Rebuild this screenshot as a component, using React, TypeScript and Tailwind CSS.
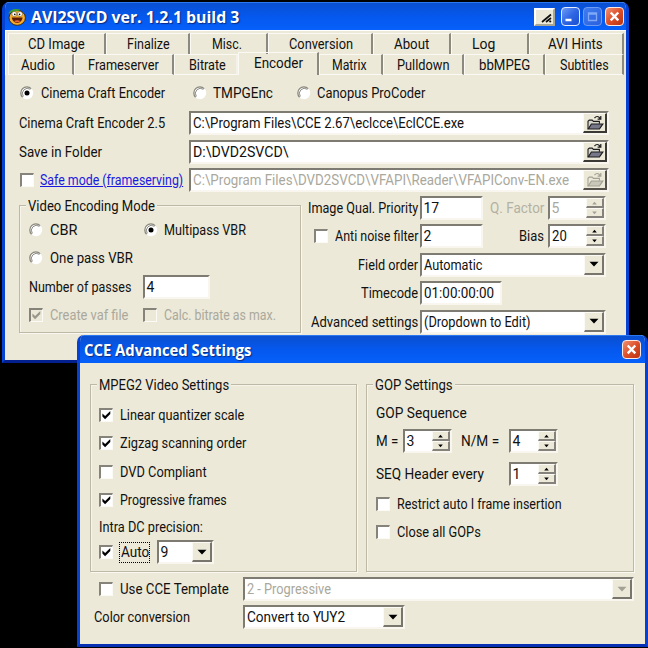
import React, { useLayoutEffect, useRef, useState } from "react";
import clsx from "clsx";

interface TxtProps {
  w: number;
  children: string;
  className?: string;
  inner?: string;
}

function Txt({ w, children, className, inner }: TxtProps) {
  const ref = useRef<HTMLSpanElement>(null);
  const [scale, setScale] = useState(1);

  useLayoutEffect(() => {
    if (ref.current) setScale(w / ref.current.offsetWidth);
  }, [w]);

  return (
    <span className={clsx("block shrink-0 whitespace-nowrap", className)} style={{ width: w }}>
      <span ref={ref} className={clsx("inline-block origin-left", inner)} style={{ transform: `scaleX(${scale})` }}>
        {children}
      </span>
    </span>
  );
}

function Radio({ checked }: { checked?: boolean }) {
  return (
    <svg width="14" height="14" viewBox="0 0 14 14" className="shrink-0">
      <circle cx="7" cy="7" r="6.2" fill="#fff" />
      <path d="M2.6 11.2A6 6 0 0 1 11.2 2.6" fill="none" stroke="#8a887c" strokeWidth="1.3" />
      <path d="M3.4 10.4A5 5 0 0 1 10.4 3.4" fill="none" stroke="#5e5d56" strokeWidth=".7" />
      {checked && <circle cx="7" cy="7" r="2.5" fill="#000" />}
    </svg>
  );
}

function Check({ checked, disabled }: { checked?: boolean; disabled?: boolean }) {
  return (
    <span
      className={clsx(
        "block size-[14px] shrink-0 border-t-2 border-l-2 border-r border-b border-t-[#85837a] border-l-[#85837a] border-r-[#fbfaf5] border-b-[#fbfaf5]",
        disabled ? "bg-[#ece9d8]" : "bg-white"
      )}
    >
      {checked && (
        <svg width="11" height="11" viewBox="0 0 11 11">
          <path d="M1.4 3.4v3.2l2.7 2.7 5.2-5.4V.9L4.1 6.1z" fill={disabled ? "#99978b" : "#000"} />
        </svg>
      )}
    </span>
  );
}

interface FieldProps {
  className?: string;
  children?: React.ReactNode;
}

function Field({ className, children }: FieldProps) {
  return (
    <div
      className={clsx(
        "flex h-[24px] shrink-0 items-center border-2 border-t-[#7d7b72] border-l-[#7d7b72] border-r-[#f8f6ee] border-b-[#f8f6ee] bg-white pl-[1.5px]",
        className
      )}
    >
      {children}
    </div>
  );
}

const raised =
  "flex shrink-0 items-center justify-center border-t border-l border-r-2 border-b-2 border-t-[#fbfaf4] border-l-[#fbfaf4] bg-[#ece9d8]";

function Spinner({ w, value, disabled, className }: { w: number; value: string; disabled?: boolean; className?: string }) {
  return (
    <Field className={className}>
      <Txt w={w} className={disabled ? "text-[#aaa89c]" : ""}>{value}</Txt>
      <div className="ml-auto flex h-full w-[18px] flex-col">
        {[0, 1].map((i) => (
          <div key={i} className={clsx(raised, "h-[10px] border-r-[#84827a] border-b-[#84827a]")}>
            <svg width="7" height="4" viewBox="0 0 7 4">
              <path d={i ? "M1.2 .5h4.6L3.5 3.2z" : "M1.2 3.5h4.6L3.5 .8z"} fill={disabled ? "#a3a194" : "#000"} />
            </svg>
          </div>
        ))}
      </div>
    </Field>
  );
}

function Dropdown({ w, value, disabled, className }: { w: number; value: string; disabled?: boolean; className?: string }) {
  return (
    <Field className={className}>
      <Txt w={w} className={disabled ? "text-[#aaa89c]" : ""}>{value}</Txt>
      <div className={clsx(raised, "ml-auto h-[20px] w-[20px] border-r-[#77756c] border-b-[#77756c]")}>
        <svg width="10" height="6" viewBox="0 0 10 6">
          <path d="M.5 .7h9L5 5.5z" fill={disabled ? "#a3a194" : "#000"} />
        </svg>
      </div>
    </Field>
  );
}

function FolderButton({ disabled }: { disabled?: boolean }) {
  const line = disabled ? "#a3a194" : "#1c1c1c";
  return (
    <div
      className={clsx(
        raised,
        "ml-auto h-[20px] w-[24px]",
        disabled ? "border-r-[#55534c] border-b-[#55534c]" : "border-r-[#3a3934] border-b-[#3a3934]"
      )}
    >
      <svg width="18" height="16" viewBox="0 0 18 16" fill="none" stroke={line}>
        <path d="M8.5 3.2C10 .9 12.6.9 14 3.4M14.8 1v3.2h-3.2" strokeWidth="1.2" />
        <path d="M2 14V6.3l1.3-1.2h2.9l1.2 1.3h6v2.4" fill={disabled ? "#ece9d8" : "#d9d8cf"} strokeWidth="1.1" />
        <path d="M2.2 14 5.4 9h11.4l-3.4 5z" fill={disabled ? "#c9c7b8" : "#77778a"} strokeWidth="1.2" />
      </svg>
    </div>
  );
}

function Group({ title, w, className, children }: { title: string; w: number; className?: string; children: React.ReactNode }) {
  return (
    <fieldset
      className={clsx("min-w-0 shrink-0 border border-[#bdb9a6] shadow-[1px_1px_0_#faf9f1,inset_1px_1px_0_#f7f5ea]", className)}
    >
      <legend className="ml-[6px] h-[18px] bg-[#ece9d8] px-[2px] leading-[20px]">
        <Txt w={w}>{title}</Txt>
      </legend>
      {children}
    </fieldset>
  );
}

function CaptionButton({ kind }: { kind: "min" | "max" | "close" }) {
  return (
    <div
      className={clsx(
        "size-[19px] shrink-0 rounded-[4px] border",
        kind === "close" && "border-[#fbe9e4] bg-linear-to-br from-[#f0906f] via-[#dd4f28] to-[#b93212]",
        kind === "min" && "border-[#e4ecfd] bg-linear-to-br from-[#6e9bf6] via-[#2f66e4] to-[#1a4fd0]",
        kind === "max" && "border-[#6d9bf4] bg-linear-to-br from-[#3f7cf0] to-[#2a5fdc]"
      )}
    >
      <svg width="17" height="17" viewBox="0 0 17 17" fill="none">
        {kind === "min" && <path d="M3.5 12h6" stroke="#fff" strokeWidth="2.6" />}
        {kind === "max" && <path d="M4.5 5h8v7.5h-8zM4.5 6h8" stroke="#7fa9f8" strokeWidth="1.3" />}
        {kind === "close" && <path d="m4.7 4.5 7.6 7.8M12.3 4.5l-7.6 7.8" stroke="#fff" strokeWidth="2.4" />}
      </svg>
    </div>
  );
}

const titleBar =
  "flex shrink-0 items-center bg-linear-to-b from-[#0a4fd0] via-[#0558ee] to-[#0560fa] font-['Open_Sans',sans-serif] text-[16px] font-bold text-white";

const tabRows = [
  [
    { label: "CD Image", w: 57, cls: "w-[98px] pl-[19px]" },
    { label: "Finalize", w: 43, cls: "w-[84px] pl-[20px]" },
    { label: "Misc.", w: 30, cls: "w-[78px] pl-[21px]" },
    { label: "Conversion", w: 64, cls: "w-[105px] pl-[20px]" },
    { label: "About", w: 35, cls: "w-[78px] pl-[20px]" },
    { label: "Log", w: 23, cls: "w-[78px] pl-[20px]" },
    { label: "AVI Hints", w: 55, cls: "w-[95px] pl-[18px]" },
  ],
  [
    { label: "Audio", w: 34, cls: "w-[66px] pl-[12px]" },
    { label: "Frameserver", w: 71, cls: "w-[100px] pl-[13px]" },
    { label: "Bitrate", w: 37, cls: "w-[64px] pl-[14px]" },
    { label: "Encoder", w: 49, cls: "w-[81px] pl-[15px]", active: true },
    { label: "Matrix", w: 35, cls: "w-[64px] pl-[12px]" },
    { label: "Pulldown", w: 53, cls: "w-[81px] pl-[13px]" },
    { label: "bbMPEG", w: 51, cls: "w-[81px] pl-[14px]" },
    { label: "Subtitles", w: 49, cls: "w-[79px] pl-[14px]" },
  ],
];

const paths = [
  { label: "Cinema Craft Encoder 2.5", lw: 146, value: "C:\\Program Files\\CCE 2.67\\eclcce\\EclCCE.exe", vw: 271 },
  { label: "Save in Folder", lw: 83, value: "D:\\DVD2SVCD\\", vw: 96 },
];

function MainWindow() {
  return (
    <div className="absolute top-[2px] left-[2px] flex h-[361px] w-[627px] flex-col overflow-hidden rounded-t-[7px] border-x-3 border-b-3 border-[#0741d2] border-b-[#041f8e] bg-[#ece9d8]">
      <div className={clsx(titleBar, "h-[28px] border-t border-[#2b78f0] pl-[3px]")}>
        <svg width="18" height="18" viewBox="0 0 18 18">
          <ellipse cx="9.2" cy="9.8" rx="8.2" ry="7.5" fill="#f7ad2c" stroke="#3a2404" strokeWidth=".9" />
          <path d="M.5 6C1.5 1.5 7 .2 12.5 1.6L10 3.4C6.500 3 3.500 4 .5 6z" fill="#3f9d31" />
          <circle cx="6.300" cy="6" r="2.500" fill="#fff" stroke="#5c3a08" strokeWidth=".5" />
          <circle cx="12" cy="6" r="2.500" fill="#fff" stroke="#5c3a08" strokeWidth=".5" />
          <circle cx="6.800" cy="6.400" r=".8" />
          <circle cx="11.600" cy="6.400" r=".8" />
          <path d="M3.800 9.600h10.800c-.3 3-2.600 5.300-5.400 5.300S4.100 12.600 3.800 9.600z" fill="#5a1a05" />
          <path d="M6 13c1.800-1 4.600-1 6.400 0-1.600 1.700-4.800 1.700-6.400 0z" fill="#ee6a3a" />
        </svg>
        <Txt w={208} className="ml-[5px] leading-[26px] [text-shadow:1px_1px_1px_#0a2a80]">AVI2SVCD ver. 1.2.1 build 3</Txt>
        <div className="mr-[2px] ml-auto flex items-center gap-[3px]">
          <div className="mr-[3px] flex h-[18px] w-[21px] items-end justify-end border-2 border-t-white border-l-white border-r-[#a8a694] border-b-[#a8a694] bg-[#ece9d8]">
            <svg width="13" height="12" viewBox="0 0 13 12">
              <path d="M2 10 11 2.500M6 10l5-4M9.500 10l1.500-1.200" stroke="#111" strokeWidth="1.700" />
            </svg>
          </div>
          <CaptionButton kind="min" />
          <CaptionButton kind="max" />
          <CaptionButton kind="close" />
        </div>
      </div>

      <div className="h-[45px] shrink-0 border-t border-l border-white pt-[2px] pl-[2px]">
        {tabRows.map((row, i) => (
          <div key={i} className="flex h-[21px] items-end">
            {row.map((tab) => (
              <div
                key={tab.label}
                className={clsx(
                  "flex shrink-0 items-center border-t border-r-2 border-l border-t-[#faf9f3] border-r-[#8c8a7f] border-l-[#faf9f3]",
                  tab.active ? "h-[23px] pb-[3px]" : "h-[21px]",
                  !tab.active && i === 1 && "border-b border-b-[#faf9f3]",
                  tab.label === "Bitrate" && "border-r-[#f4f2e8]",
                  tab.cls
                )}
              >
                <Txt w={tab.w}>{tab.label}</Txt>
              </div>
            ))}
          </div>
        ))}
      </div>

      <div className="flex h-[36px] shrink-0 items-center pl-[15px]">
        <Radio checked />
        <Txt w={124} className="ml-[7px]">Cinema Craft Encoder</Txt>
        <div className="ml-[28px] flex items-center">
          <Radio />
          <Txt w={60} className="ml-[6px]">TMPGEnc</Txt>
        </div>
        <div className="ml-[24px] flex items-center">
          <Radio />
          <Txt w={108} className="ml-[6px]">Canopus ProCoder</Txt>
        </div>
      </div>

      <div className="flex shrink-0 flex-col gap-[4.5px] pl-[14px]">
        {paths.map((p) => (
          <div key={p.label} className="flex items-center">
            <div className="w-[170px]">
              <Txt w={p.lw}>{p.label}</Txt>
            </div>
            <Field className="w-[420px]">
              <Txt w={p.vw}>{p.value}</Txt>
              <FolderButton />
            </Field>
          </div>
        ))}
        <div className="flex items-center">
          <div className="flex w-[170px] items-center pl-px">
            <Check />
            <Txt w={143} className="ml-[6px] text-[#1a1ae0]" inner="underline">Safe mode (frameserving)</Txt>
          </div>
          <Field className="w-[420px]">
            <Txt w={376} className="text-[#aaa89c]">C:\Program Files\DVD2SVCD\VFAPI\Reader\VFAPIConv-EN.exe</Txt>
            <FolderButton disabled />
          </Field>
        </div>
      </div>

      <div className="flex pt-[4px] pl-[14px]">
        <Group title="Video Encoding Mode" w={127} className="h-[137px] w-[282px]">
          <div className="flex flex-col pl-[9px]">
            <div className="flex h-[28px] items-center pt-[4px]">
              <Radio />
              <Txt w={27} className="ml-[7px]">CBR</Txt>
              <div className="ml-[67px] flex items-center">
                <Radio checked />
                <Txt w={82} className="ml-[6px]">Multipass VBR</Txt>
              </div>
            </div>
            <div className="flex h-[28px] items-center pt-[4px]">
              <Radio />
              <Txt w={83} className="ml-[7px]">One pass VBR</Txt>
            </div>
            <div className="flex h-[29px] items-center pt-[5px]">
              <Txt w={102}>Number of passes</Txt>
              <Field className="ml-[12px] w-[67px]">
                <Txt w={8}>4</Txt>
              </Field>
            </div>
            <div className="flex h-[29px] items-center pt-[3px] text-[#aaa89c]">
              <Check checked disabled />
              <Txt w={78} className="ml-[7px]">Create vaf file</Txt>
              <div className="ml-[15px] flex items-center">
                <Check disabled />
                <Txt w={112} className="ml-[7px]">Calc. bitrate as max.</Txt>
              </div>
            </div>
          </div>
        </Group>

        <div className="flex w-[306px] flex-col gap-[4.4px] pr-px">
          <div className="flex items-center justify-end">
            <Txt w={110}>Image Qual. Priority</Txt>
            <Field className="ml-[2px] w-[63px]"><Txt w={16}>17</Txt></Field>
            <Txt w={54} className="ml-[7px] text-[#b3b1a4]">Q. Factor</Txt>
            <Spinner w={8} value="5" disabled className="ml-[4px] w-[58px]" />
          </div>
          <div className="flex items-center justify-end">
            <Check />
            <Txt w={83} className="ml-[7px]">Anti noise filter</Txt>
            <Field className="ml-[2px] w-[63px]"><Txt w={8}>2</Txt></Field>
            <Txt w={25} className="ml-[36px]">Bias</Txt>
            <Spinner w={15} value="20" className="ml-[4px] w-[58px]" />
          </div>
          <div className="flex items-center justify-end">
            <Txt w={60}>Field order</Txt>
            <Dropdown w={58} value="Automatic" className="ml-[2px] w-[186px]" />
          </div>
          <div className="flex items-center justify-end pr-[104px]">
            <Txt w={57}>Timecode</Txt>
            <Field className="ml-[2px] w-[82px]"><Txt w={70}>01:00:00:00</Txt></Field>
          </div>
          <div className="flex items-center justify-end">
            <Txt w={107}>Advanced settings</Txt>
            <Dropdown w={107} value="(Dropdown to Edit)" className="ml-[2px] w-[186px]" />
          </div>
        </div>
      </div>
    </div>
  );
}

const videoOptions = [
  { label: "Linear quantizer scale", w: 124, checked: true },
  { label: "Zigzag scanning order", w: 126, checked: true },
  { label: "DVD Compliant", w: 87, checked: false },
  { label: "Progressive frames", w: 107, checked: true },
];

function AdvancedDialog() {
  return (
    <div className="absolute top-[335px] left-[77px] flex h-[312px] w-[571px] flex-col overflow-hidden rounded-t-[7px] border-x-3 border-b-3 border-[#0741d2] border-b-[#0630b4] bg-[#ece9d8]">
      <div className={clsx(titleBar, "h-[28px] border-t border-[#2b78f0] pl-[4px]")}>
        <Txt w={167} className="leading-[26px] [text-shadow:1px_1px_1px_#0a2a80]">CCE Advanced Settings</Txt>
        <div className="mr-[4px] ml-auto">
          <CaptionButton kind="close" />
        </div>
      </div>

      <div className="flex gap-[9px] pt-[12px] pl-[10px]">
        <Group title="MPEG2 Video Settings" w={130} className="h-[197px] w-[267px]">
          <div className="flex flex-col pl-[8px]">
            <div className="flex flex-col gap-[14.4px] pt-[15px]">
              {videoOptions.map((o) => (
                <div key={o.label} className="flex h-[14px] items-center">
                  <Check checked={o.checked} />
                  <Txt w={o.w} className="ml-[7px]">{o.label}</Txt>
                </div>
              ))}
            </div>
            <Txt w={104} className="mt-[11px]">Intra DC precision:</Txt>
            <div className="mt-[4px] flex items-center">
              <Check checked />
              <div className="ml-[6px] flex h-[21px] w-[31px] items-center border border-dotted border-black pl-px">
                <Txt w={28}>Auto</Txt>
              </div>
              <Dropdown w={8} value="9" className="ml-[7px] w-[57px]" />
            </div>
          </div>
        </Group>

        <Group title="GOP Settings" w={78} className="h-[197px] w-[268px]">
          <div className="flex flex-col pl-[9px]">
            <Txt w={91} className="mt-[11px]">GOP Sequence</Txt>
            <div className="mt-[7px] flex items-center">
              <Txt w={22}>M =</Txt>
              <Spinner w={8} value="3" className="ml-[5px] w-[49px]" />
              <Txt w={38} className="ml-[9px]">N/M =</Txt>
              <Spinner w={8} value="4" className="ml-[10px] w-[49px]" />
            </div>
            <div className="mt-[9px] flex items-center">
              <Txt w={108}>SEQ Header every</Txt>
              <Spinner w={8} value="1" className="ml-[25px] w-[49px]" />
            </div>
            <div className="mt-[11px] flex h-[14px] items-center">
              <Check />
              <Txt w={165} className="ml-[7px]">Restrict auto I frame insertion</Txt>
            </div>
            <div className="mt-[14px] flex h-[14px] items-center">
              <Check />
              <Txt w={84} className="ml-[7px]">Close all GOPs</Txt>
            </div>
          </div>
        </Group>
      </div>

      <div className="mt-[5px] flex items-center pl-[19px]">
        <Check />
        <Txt w={109} className="ml-[7px]">Use CCE Template</Txt>
        <Dropdown w={84} value="2 - Progressive" disabled className="ml-[14px] w-[391px]" />
      </div>
      <div className="mt-[4px] flex items-center pl-[14px]">
        <Txt w={96}>Color conversion</Txt>
        <Dropdown w={98} value="Convert to YUY2" className="ml-[53px] w-[162px]" />
      </div>
    </div>
  );
}

function App() {
  return (
    <div className="relative h-[648px] w-[648px] overflow-hidden bg-black font-['Roboto',sans-serif] text-[14px] leading-[18px] text-[#111]">
      <MainWindow />
      <AdvancedDialog />
    </div>
  );
}

export default App;
